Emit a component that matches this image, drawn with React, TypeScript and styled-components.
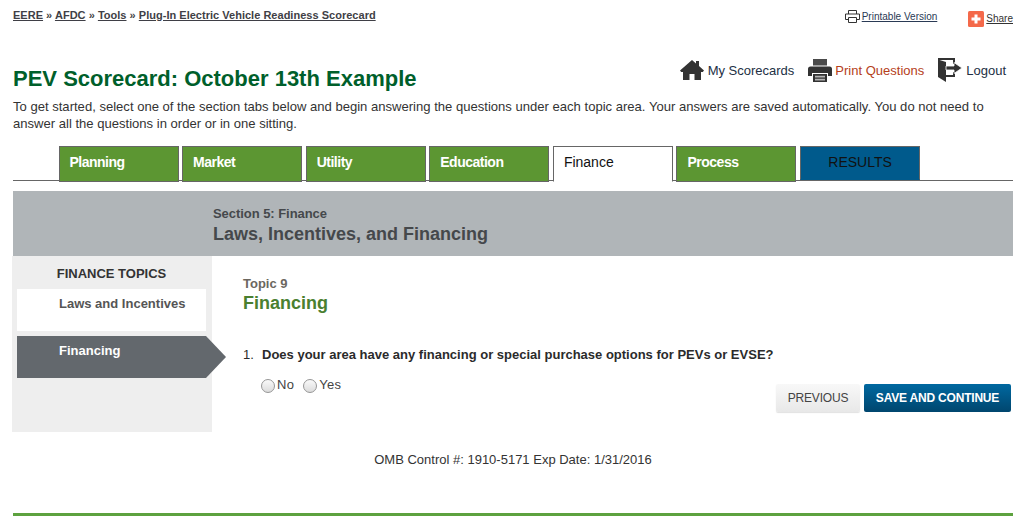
import React from "react";
import styled, { createGlobalStyle } from "styled-components";

const Global = createGlobalStyle`
  html, body { margin: 0; padding: 0; background: #fff; }
  body { font-family: "Liberation Sans", Arial, sans-serif; color: #333; }
`;

const Page = styled.div`
  width: 1000px;
  margin-left: 13px;
  height: 525px;
  display: flex;
  flex-direction: column;
`;

const TopBar = styled.div`
  display: flex;
  justify-content: space-between;
  align-items: flex-start;
  height: 60px;
`;

const Breadcrumb = styled.nav`
  padding-top: 8px;
  font-size: 11px;
  letter-spacing: 0.02px;
  line-height: 14px;
  font-weight: bold;
  color: #444;
  a { color: #3f3f46; text-decoration: underline; }
`;

const UtilityLinks = styled.div`
  display: flex;
  align-items: flex-start;
  padding-top: 10px;
`;

const SmallLink = styled.a<{ $gap: number }>`
  display: flex;
  align-items: center;
  gap: 2px;
  font-size: 10px;
  line-height: 12px;
  color: #2a3a55;
  margin-left: ${(p) => p.$gap}px;
  span { text-decoration: underline; }
`;

const ShareLink = styled(SmallLink)`
  color: #333;
  padding-top: 1px;
`;

const TitleRow = styled.div`
  display: flex;
  justify-content: space-between;
  align-items: flex-start;
  height: 38px;
`;

const Title = styled.h1`
  margin: 5px 0 0;
  font-size: 22px;
  line-height: 28px;
  font-weight: bold;
  color: #005f2b;
`;

const ActionLinks = styled.div`
  display: flex;
  align-items: center;
  margin: -2px 7px 0 0;
`;

const ActionLink = styled.a<{ $accent?: boolean; $gap: number }>`
  display: flex;
  align-items: center;
  gap: ${(p) => p.$gap}px;
  margin-left: 14px;
  font-size: 13px;
  color: ${(p) => (p.$accent ? "#b5401a" : "#223044")};
`;

const Intro = styled.p`
  margin: 0;
  width: 985px;
  height: 48px;
  font-size: 13.07px;
  line-height: 17px;
  color: #333;
`;

const Tabs = styled.div`
  display: flex;
  gap: 3.6px;
  height: 34px;
  padding-left: 45.5px;
  border-bottom: 1px solid #666;
`;

const Tab = styled.div<{ $kind: "green" | "active" | "blue" }>`
  box-sizing: border-box;
  width: 120px;
  height: ${(p) => (p.$kind === "blue" ? "34px" : "36px")};
  border: 1px solid #666;
  border-bottom-color: ${(p) => (p.$kind === "active" ? "#fff" : p.$kind === "blue" ? "#005a8c" : "#666")};
  background: ${(p) => (p.$kind === "green" ? "#5c9632" : p.$kind === "blue" ? "#005a8c" : "#fff")};
  color: ${(p) => (p.$kind === "green" ? "#fff" : "#111")};
  font-size: 14px;
  font-weight: ${(p) => (p.$kind === "green" ? "bold" : "normal")};
  letter-spacing: ${(p) => (p.$kind === "green" ? "-0.5px" : "0")};
  line-height: 31px;
  padding-left: ${(p) => (p.$kind === "blue" ? "0" : "10px")};
  text-align: ${(p) => (p.$kind === "blue" ? "center" : "left")};
  position: relative;
  z-index: 1;
`;

const SectionBand = styled.div`
  margin-top: 10px;
  height: 65px;
  background: #b0b5b8;
  box-sizing: border-box;
  padding: 15px 0 0 200px;
  color: #45484b;
  font-weight: bold;
`;

const SectionLabel = styled.div`
  font-size: 13px;
  letter-spacing: -0.05px;
  line-height: 15px;
  margin-bottom: 2px;
`;

const SectionTitle = styled.div`
  font-size: 18px;
  line-height: 22px;
`;

const Main = styled.div`
  display: flex;
  align-items: flex-start;
`;

const Sidebar = styled.aside`
  box-sizing: border-box;
  width: 200px;
  height: 176px;
  margin-left: -1px;
  background: #eee;
  padding: 10px 6px 0 5px;
`;

const SidebarHeading = styled.div`
  font-size: 13px;
  line-height: 16px;
  font-weight: bold;
  color: #333;
  text-align: center;
  margin: 0 0 7px 0;
`;

const TopicItem = styled.div<{ $active?: boolean }>`
  box-sizing: border-box;
  height: 42px;
  margin-bottom: 5px;
  padding: 7px 0 0 42px;
  font-size: 13px;
  line-height: 15px;
  font-weight: bold;
  color: #555;
  background: #fff;
  ${(p) =>
    p.$active &&
    `
    width: 209px;
    background: #63686d;
    color: #fff;
    clip-path: polygon(0 0, 189px 0, 100% 50%, 189px 100%, 0 100%);
  `}
`;

const Content = styled.section`
  flex: 1;
  box-sizing: border-box;
  padding: 20px 2px 0 31px;
`;

const TopicLabel = styled.div`
  font-size: 13px;
  line-height: 15px;
  font-weight: bold;
  color: #6b675f;
`;

const TopicTitle = styled.h2`
  margin: 0 0 32px;
  font-size: 18px;
  line-height: 24px;
  font-weight: bold;
  color: #4a8030;
`;

const Question = styled.div`
  display: flex;
  font-size: 13px;
  line-height: 16px;
  font-weight: bold;
  color: #2b2b2b;
`;

const QuestionNumber = styled.span`
  font-weight: normal;
  width: 19px;
`;

const AnswerRow = styled.div`
  display: flex;
  justify-content: space-between;
  align-items: flex-start;
`;

const Options = styled.div`
  display: flex;
  gap: 9px;
  padding: 14px 0 0 18px;
`;

const Option = styled.label`
  display: flex;
  align-items: center;
  gap: 2px;
  font-size: 13px;
  letter-spacing: 0.3px;
  line-height: 16px;
  color: #444;
`;

const RadioDot = styled.span`
  box-sizing: border-box;
  display: block;
  width: 14px;
  height: 14px;
  margin-top: 1px;
  border-radius: 50%;
  border: 1px solid #969696;
  background: linear-gradient(#fafafa, #dcdcdc);
`;

const Buttons = styled.div`
  display: flex;
  gap: 4px;
  padding-top: 21px;
`;

const PrevButton = styled.div`
  width: 84px;
  height: 28px;
  border-radius: 2px;
  background: linear-gradient(#f8f8f8, #e8e8e8);
  box-shadow: 0 1px 1px rgba(0, 0, 0, 0.12);
  color: #444;
  font-size: 12px;
  letter-spacing: -0.2px;
  line-height: 29px;
  text-align: center;
`;

const SaveButton = styled.div`
  width: 147px;
  height: 28px;
  border-radius: 2px;
  background: linear-gradient(#0068a0, #00466e);
  color: #fff;
  font-size: 12px;
  font-weight: bold;
  letter-spacing: -0.2px;
  line-height: 28px;
  text-align: center;
`;

const Omb = styled.div`
  margin-top: 20px;
  font-size: 13px;
  line-height: 16px;
  color: #333;
  text-align: center;
`;

const FooterRule = styled.div`
  margin-top: 45px;
  height: 3px;
  background: #5da23f;
`;

const PrinterOutline = () => (
  <svg width="15" height="13" viewBox="0 0 15 13" fill="none" stroke="#333" strokeWidth="1">
    <path d="M3.5 4V.5h8V4M3.5 9.5H.5V4h14v5.5h-3" />
    <path d="M3.5 7.5h8v5h-8z" />
  </svg>
);

const ShareIcon = () => (
  <svg width="16" height="16" viewBox="0 0 16 16">
    <rect width="16" height="16" rx="1.5" fill="#f4694a" />
    <path d="M6.5 3.5h3v3h3v3h-3v3h-3v-3h-3v-3h3z" fill="#fff" />
  </svg>
);

const HomeIcon = () => (
  <svg width="24" height="20" viewBox="0 0 24 20" fill="#333">
    <path d="M12 0 16 3.4V1h3v5l5 4.5-1.2 1.5H21v8h-6.5v-6h-5v6H3v-8H1.2L0 10.5z" />
  </svg>
);

const PrinterIcon = () => (
  <svg width="24" height="23" viewBox="0 0 24 23">
    <path d="M5 0h14v6.5H5z" fill="#4a4a4a" />
    <path d="M2.5 7.5h19A2.5 2.5 0 0 1 24 10v7h-4v-3H4v3H0v-7a2.5 2.5 0 0 1 2.5-2.5z" fill="#333" />
    <path d="M5 15h14v8H5z" fill="#333" />
    <path d="M7 16.8h10v1.8H7zM7 19.8h10v1.6H7z" fill="#b5b5b5" />
  </svg>
);

const LogoutIcon = () => (
  <svg width="24" height="24" viewBox="0 0 24 24" fill="#333">
    <path d="M0 0h17v6h-2V2H0z" />
    <path d="M0 1.5 8 4v20L0 19z" />
    <path d="M8 17h7v-3h2v5H8z" />
    <path d="M8 8h8V4.5L24 10l-8 5.5V12H8z" stroke="#fff" strokeWidth="0.8" />
  </svg>
);

export default function App() {
  return (
    <>
      <Global />
      <Page>
        <TopBar>
          <Breadcrumb>
            <a>EERE</a> » <a>AFDC</a> » <a>Tools</a> » <a>Plug-In Electric Vehicle Readiness Scorecard</a>
          </Breadcrumb>
          <UtilityLinks>
            <SmallLink $gap={0}>
              <PrinterOutline />
              <span>Printable Version</span>
            </SmallLink>
            <ShareLink $gap={31}>
              <ShareIcon />
              <span>Share</span>
            </ShareLink>
          </UtilityLinks>
        </TopBar>
        <TitleRow>
          <Title>PEV Scorecard: October 13th Example</Title>
          <ActionLinks>
            <ActionLink $gap={4}>
              <HomeIcon />
              My Scorecards
            </ActionLink>
            <ActionLink $accent $gap={3}>
              <PrinterIcon />
              Print Questions
            </ActionLink>
            <ActionLink $gap={4}>
              <LogoutIcon />
              Logout
            </ActionLink>
          </ActionLinks>
        </TitleRow>
        <Intro>
          To get started, select one of the section tabs below and begin answering the questions under each topic area. Your answers are saved automatically. You do not need to answer all the questions in order or in one sitting.
        </Intro>
        <Tabs>
          <Tab $kind="green">Planning</Tab>
          <Tab $kind="green">Market</Tab>
          <Tab $kind="green">Utility</Tab>
          <Tab $kind="green">Education</Tab>
          <Tab $kind="active">Finance</Tab>
          <Tab $kind="green">Process</Tab>
          <Tab $kind="blue">RESULTS</Tab>
        </Tabs>
        <SectionBand>
          <SectionLabel>Section 5: Finance</SectionLabel>
          <SectionTitle>Laws, Incentives, and Financing</SectionTitle>
        </SectionBand>
        <Main>
          <Sidebar>
            <SidebarHeading>FINANCE TOPICS</SidebarHeading>
            <TopicItem>Laws and Incentives</TopicItem>
            <TopicItem $active>Financing</TopicItem>
          </Sidebar>
          <Content>
            <TopicLabel>Topic 9</TopicLabel>
            <TopicTitle>Financing</TopicTitle>
            <Question>
              <QuestionNumber>1.</QuestionNumber>
              Does your area have any financing or special purchase options for PEVs or EVSE?
            </Question>
            <AnswerRow>
              <Options>
                <Option><RadioDot />No</Option>
                <Option><RadioDot />Yes</Option>
              </Options>
              <Buttons>
                <PrevButton>PREVIOUS</PrevButton>
                <SaveButton>SAVE AND CONTINUE</SaveButton>
              </Buttons>
            </AnswerRow>
          </Content>
        </Main>
        <Omb>OMB Control #: 1910-5171 Exp Date: 1/31/2016</Omb>
        <FooterRule />
      </Page>
    </>
  );
}
